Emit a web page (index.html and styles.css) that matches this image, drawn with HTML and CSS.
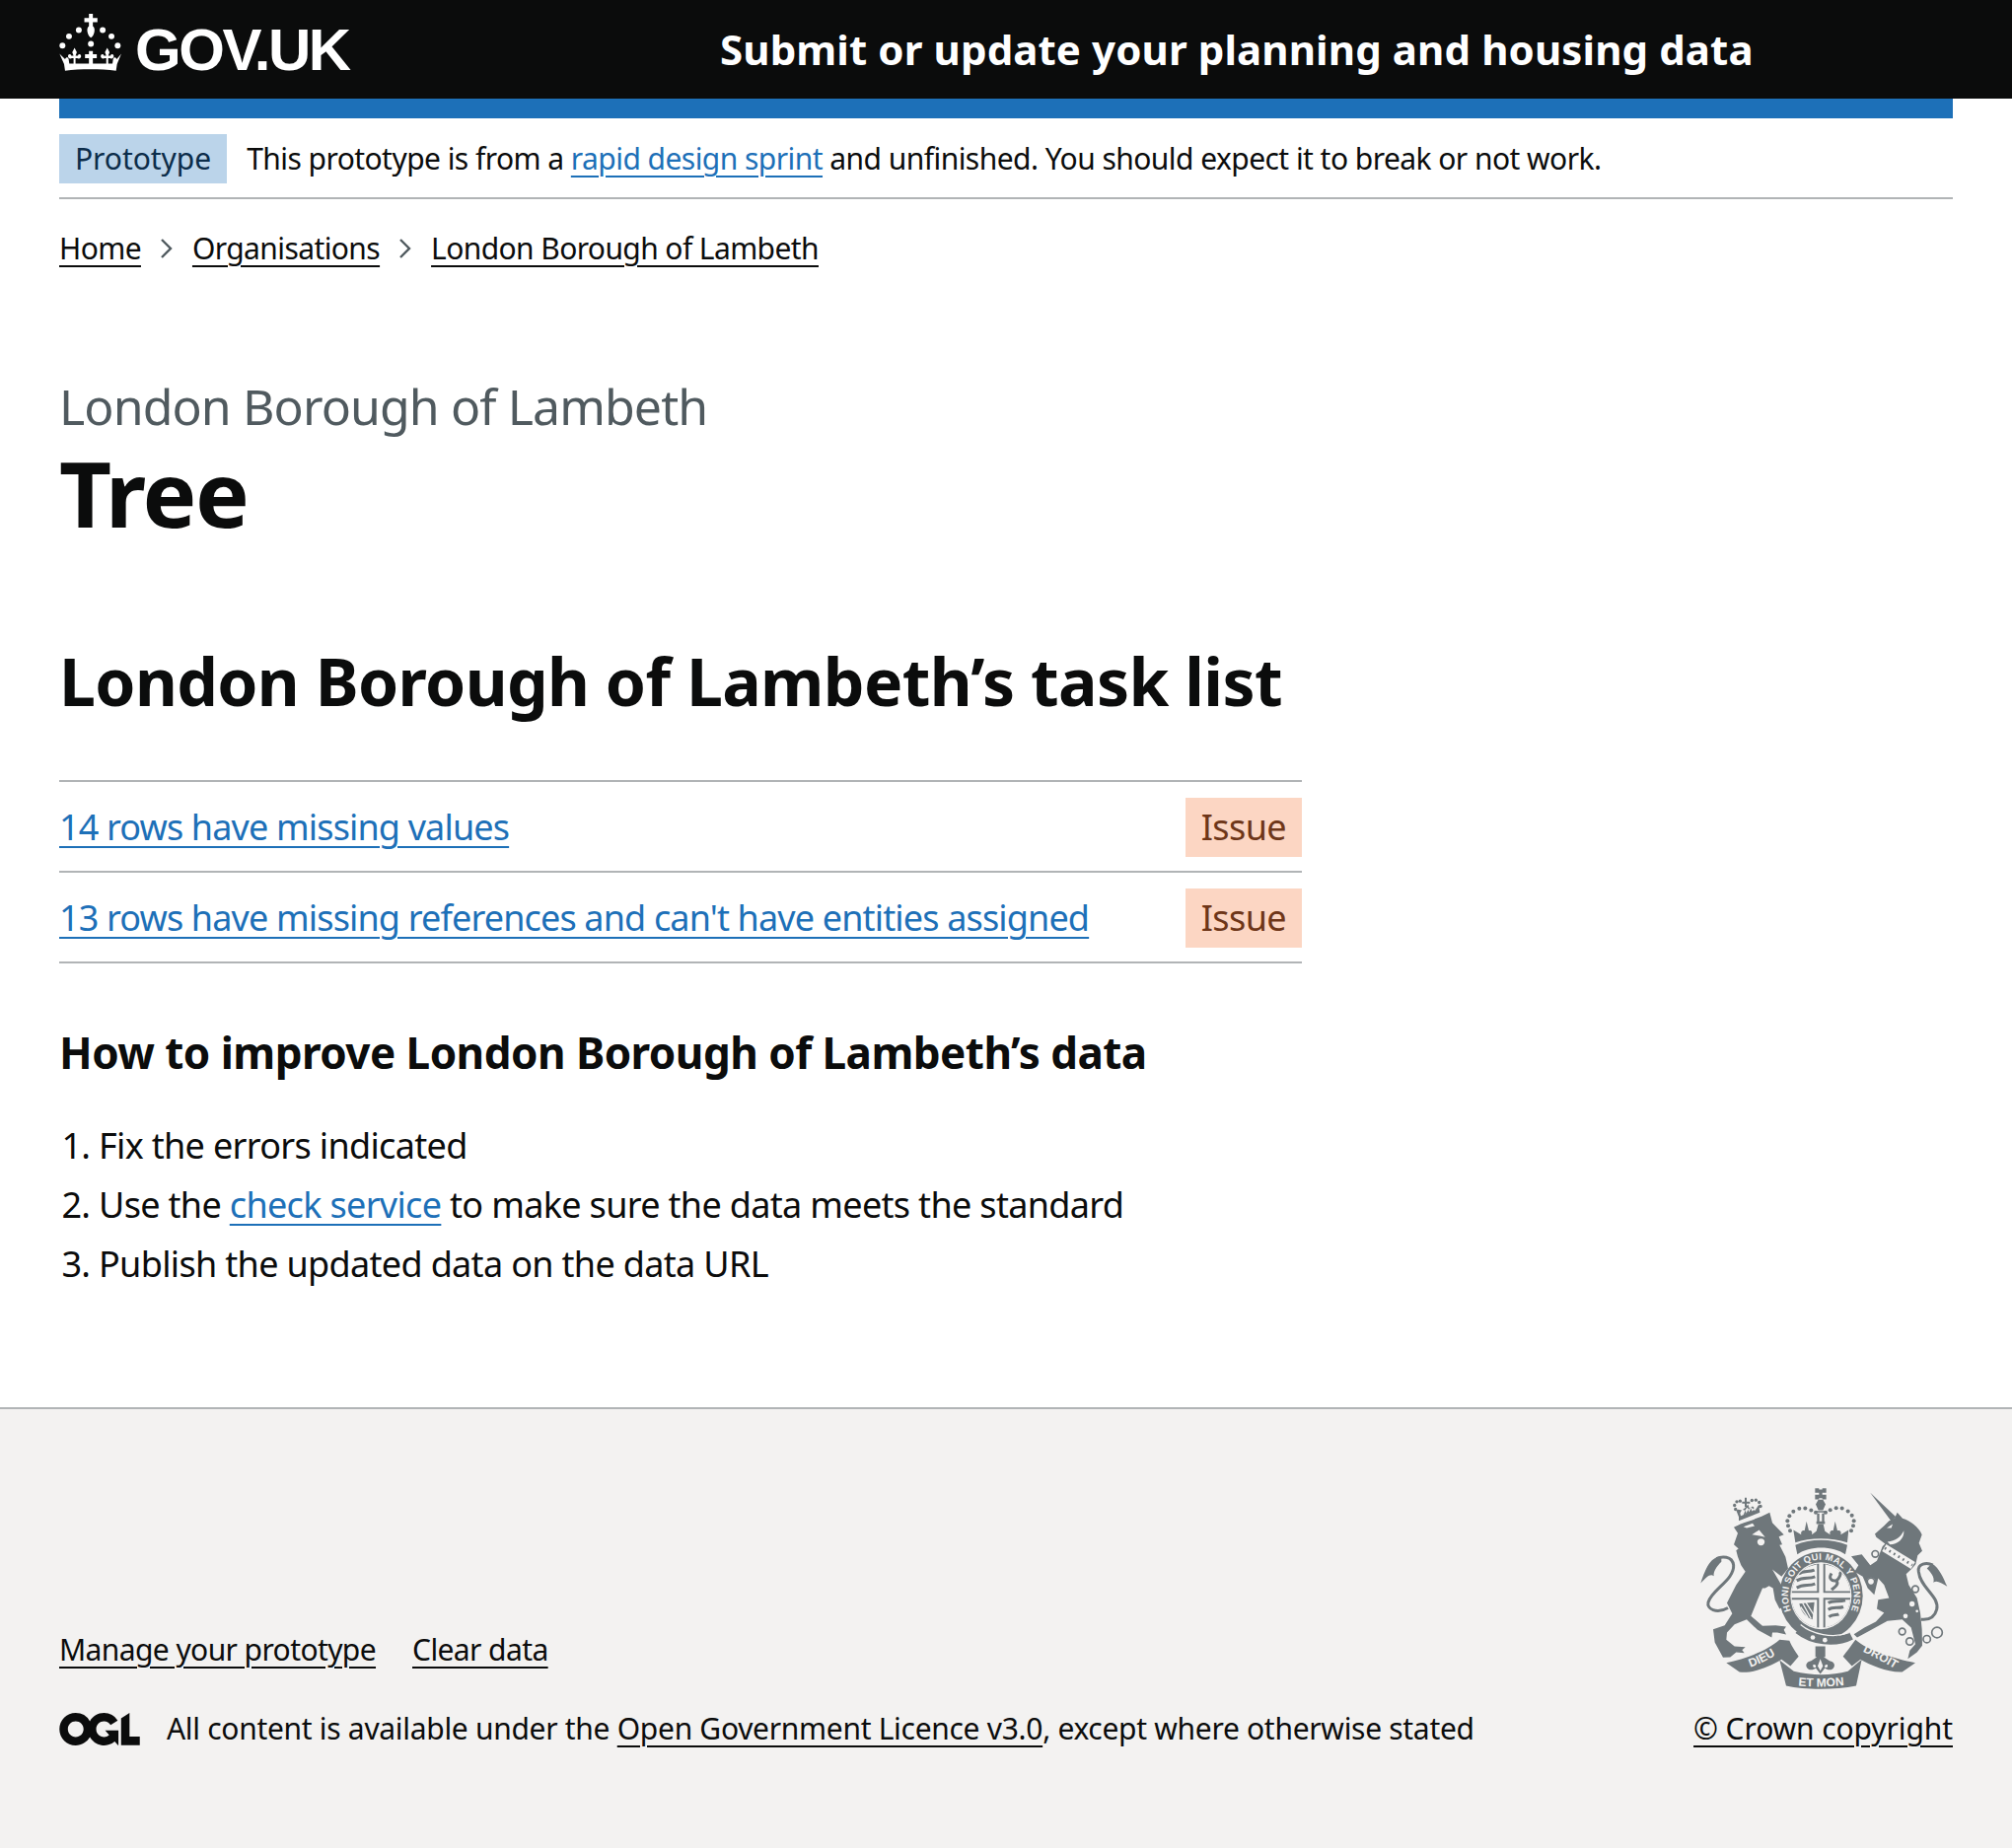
FILE: index.html
```html
<!DOCTYPE html>
<html lang="en">
<head>
<meta charset="utf-8">
<title>Tree - London Borough of Lambeth</title>
<link rel="stylesheet" href="styles.css">
</head>
<body>
<header class="site-header">
  <a class="logo" href="#">
    <svg class="crown" viewBox="15 18 190 175" aria-hidden="true">
      <defs><path id="fl" d="M0 0L7 14L3 24H10C12 18 20 18 20 26C20 34 12 34 8 32H3V50H-3V32H-8C-12 34-20 34-20 26C-20 18-12 18-10 24H-3L-7 14Z"/></defs>
      <path d="M106 18h12v13h14v13h-14v12c6 5 6 12 4 20c-2 8-6 13-10 15c-4-2-8-7-10-15c-2-8-2-15 4-20V44H92V31h14z"/>
      <circle cx="75" cy="68" r="9"/><circle cx="148" cy="68" r="9"/><circle cx="45" cy="87" r="9"/><circle cx="175" cy="87" r="9"/><circle cx="25" cy="115" r="9"/><circle cx="194" cy="115" r="9"/><circle cx="112" cy="110" r="9"/>
      <use href="#fl" x="62" y="122"/><use href="#fl" x="162" y="122"/>
      <path d="M106 132h12v10h12v12h-12v18h-12v-18H94v-12h12z"/>
      <path d="M16 140L33 157C36 150 42 150 44 157L46 170H178L180 157C182 150 188 150 191 157L205 140L192 172L189 192C140 186 80 186 33 192L30 172Z"/>
    </svg>
    <span class="logo-text">GOV.UK</span>
  </a>
  <a class="service-name" href="#">Submit or update your planning and housing data</a>
</header>
<div class="header-bar"></div>
<div class="page">
  <div class="phase">
    <strong class="tag tag-blue">Prototype</strong>
    <span class="phase-text">This prototype is from a <a class="link" href="#">rapid design sprint</a> and unfinished. You should expect it to break or not work.</span>
  </div>
  <nav class="crumbs">
    <a class="crumb" href="#">Home</a>
    <svg class="chev" viewBox="0 0 14 22"><path d="M2 2l9 9-9 9"/></svg>
    <a class="crumb" href="#">Organisations</a>
    <svg class="chev" viewBox="0 0 14 22"><path d="M2 2l9 9-9 9"/></svg>
    <a class="crumb" href="#">London Borough of Lambeth</a>
  </nav>
  <main class="main">
    <span class="caption">London Borough of Lambeth</span>
    <h1 class="title">Tree</h1>
    <h2 class="subtitle">London Borough of Lambeth’s task list</h2>
    <ul class="tasks">
      <li class="task"><a class="link" href="#">14 rows have missing values</a><strong class="tag tag-issue">Issue</strong></li>
      <li class="task"><a class="link" href="#">13 rows have missing references and can't have entities assigned</a><strong class="tag tag-issue">Issue</strong></li>
    </ul>
    <h3 class="how">How to improve London Borough of Lambeth’s data</h3>
    <ol class="steps">
      <li>Fix the errors indicated</li>
      <li>Use the <a class="link" href="#">check service</a> to make sure the data meets the standard</li>
      <li>Publish the updated data on the data URL</li>
    </ol>
  </main>
</div>
<footer class="footer">
  <div class="footer-inner">
    <div class="footer-left">
      <div class="footer-links">
        <a class="flink" href="#">Manage your prototype</a>
        <a class="flink" href="#">Clear data</a>
      </div>
      <div class="licence">
        <svg class="ogl" viewBox="0 0 483.2 195.7" aria-hidden="true"><path d="M421.5 142.8V.1l-50.7 32.3v161.1h112.4v-50.7zm-122.3-9.6A47.12 47.12 0 0 1 221 97.8c0-26 21.1-47.1 47.1-47.1 16.7 0 31.4 8.7 39.7 21.8l42.7-27.2A97.63 97.63 0 0 0 268.1 0c-36.5 0-68.3 20.1-85.1 49.7A98 98 0 0 0 97.8 0C43.9 0 0 43.9 0 97.8s43.9 97.8 97.8 97.8c36.5 0 68.3-20.1 85.1-49.7a97.76 97.76 0 0 0 149.6 25.4l19.4 22.2h3v-87.8h-80l24.3 27.5zM97.8 145c-26 0-47.1-21.1-47.1-47.1s21.1-47.1 47.1-47.1 47.2 21 47.2 47S123.8 145 97.8 145"/></svg>
        <span class="licence-text">All content is available under the <a class="flink" href="#">Open Government Licence v3.0</a>, except where otherwise stated</span>
      </div>
    </div>
    <div class="footer-right">
      <svg class="crest" viewBox="125 85 765 620" aria-hidden="true">
        <defs>
          <path id="ring" d="M431 500A100 110 0 1 1 565 500"/>
          <path id="rib-l" d="M262 642Q325 625 378 585"/>
          <path id="rib-r" d="M612 582Q675 610 735 648"/>
          <path id="rib-c" d="M412 690Q495 700 585 688"/>
          <clipPath id="shield-clip"><ellipse cx="498" cy="418" rx="90" ry="98"/></clipPath>
        </defs>
        <path class="cs" d="M215 455C180 475 150 458 155 438C165 400 235 370 232 325C228 295 195 298 180 305"/>
        <path d="M195 298C165 300 150 325 132 380C150 362 160 350 172 358C170 345 180 330 195 315Z"/>
        <path d="M233 210C255 195 300 188 342 165L350 196L385 232L370 238L380 262L372 264L390 300L398 335L378 360L350 338L380 390L405 430L400 445L385 450L372 458L358 430L352 395L340 388L328 395L320 395L305 430L285 480L320 510L360 508L392 512L385 522L392 536L365 530L350 530L348 545L305 522L272 490L235 505L212 530L210 552L235 572L268 574L258 583L265 592L240 590L222 605L200 606L175 560L170 520L205 508L228 472L212 440L240 385L268 345L255 325L245 300L240 280L247 275L233 262L245 228Z"/>
        <path class="lt" d="M262 208L290 198L296 206L272 212ZM288 232L310 218L328 240L312 236ZM305 250a11 12 0 1 0 21 0a11 8 0 0 0-21 0Z"/>
        <path d="M248 190L312 165L310 152L318 146L308 142L300 155L290 146L280 152L276 140L268 150L258 158L246 156L240 158L248 178Z"/>
        <path d="M258 132h8v-12h6v12h10v6h-10v10h-6v-10h-8z"/>
        <g><circle cx="238" cy="155" r="5"/><circle cx="235" cy="143" r="5"/><circle cx="242" cy="132" r="5"/><circle cx="252" cy="130" r="5"/><circle cx="288" cy="128" r="5"/><circle cx="300" cy="127" r="5"/><circle cx="310" cy="134" r="5"/><circle cx="314" cy="146" r="5"/></g>
        <path class="lt" d="M254 175l46-18-3-8-6 5-6-6-6 8-6-6-6 9-9-3-6 10z"/>
        <path d="M262 172l6-14 3 10 5-12 3 8 6-12 3 10 6-6 1 6z"/>
        <path d="M480 91h12v14h-12zM502 91h12v14h-12zM480 111h12v14h-12zM502 111h12v14h-12zM492 95h10v26h-10z"/>
        <path d="M490 126h14l8 14-8 18h-14l-8-18z"/>
        <path d="M484 160h26v5h-26zM484 192h26v8h-26zM486 168h7v24h-7zM501 168h7v24h-7z"/>
        <g><circle cx="404" cy="220" r="6"/><circle cx="398" cy="205" r="6"/><circle cx="396" cy="190" r="6"/><circle cx="402" cy="175" r="6"/><circle cx="414" cy="162" r="6"/><circle cx="432" cy="153" r="6"/><circle cx="450" cy="152" r="6"/><circle cx="468" cy="158" r="6"/><circle cx="482" cy="165" r="6"/><circle cx="512" cy="165" r="6"/><circle cx="526" cy="157" r="6"/><circle cx="544" cy="151" r="6"/><circle cx="562" cy="152" r="6"/><circle cx="580" cy="161" r="6"/><circle cx="592" cy="174" r="6"/><circle cx="598" cy="190" r="6"/><circle cx="596" cy="205" r="6"/><circle cx="590" cy="220" r="6"/></g>
        <path d="M414 218L438 232C435 220 445 218 448 220L454 192L461 220C465 218 474 220 470 232L484 222L490 200H505L510 222L526 232C522 220 532 218 535 220L541 192L548 220C552 218 562 220 558 232L582 218L578 256C530 240 464 240 420 256Z"/>
        <path d="M420 264C465 244 530 244 578 264L572 292C535 265 462 265 426 292Z"/>
        <ellipse class="garter" cx="498" cy="418" rx="127" ry="134"/>
        <ellipse class="lt" cx="498" cy="418" rx="93" ry="102"/>
        <text class="ring-text"><textPath href="#ring" startOffset="50%" text-anchor="middle">HONI SOIT QUI MAL Y PENSE</textPath></text>
        <g clip-path="url(#shield-clip)">
          <path d="M408 316H492V409H408ZM505 316H590V409H505ZM408 424H492V520H408ZM505 424H590V520H505Z"/>
          <path class="lt" d="M405 345L486 322V404H405ZM511 322L590 345V404H511ZM405 430H486V515H405ZM511 430H590V515H511Z"/>
          <path class="lump" d="M430 352C445 340 460 348 478 340M424 372C445 360 460 368 480 360M424 394C445 382 460 390 480 382M520 440C535 430 550 438 572 432M520 460C535 450 550 458 566 452M522 482C535 472 545 478 552 474"/>
          <path class="lump" d="M530 350C520 365 530 375 545 372C555 385 535 395 530 400M545 372C555 365 560 350 555 345"/>
          <path class="lump2" d="M432 442L478 438L472 490C455 485 438 470 432 442Z"/>
          <path class="lt-s" d="M442 440L468 488M452 438L476 476M436 452L458 484"/>
        </g>
        <path d="M648 105L726 178L712 192Z"/>
        <path d="M662 230L690 205L705 190L722 183L730 165L746 183C770 190 795 210 805 232L796 258L806 282L792 295L786 322L775 335L757 352L765 385L790 425L800 470L805 520L806 570L790 590L762 610L768 585L785 565L772 515L745 490L700 495L640 528L608 545L598 535L630 515L665 497L690 470L668 458L672 430L705 425L690 385L672 365L660 415L640 395L625 360L600 345L612 325L590 298L622 292L648 325L668 312L685 268L693 260L680 250L666 240Z"/>
        <path class="lt" d="M698 212L716 200L712 212ZM700 254C725 250 740 240 750 220C752 245 730 262 708 262Z"/>
        <path class="collar" d="M690 272L778 326"/>
        <path class="collar-d" d="M692 273L776 325"/>
        <circle class="ring-c" cx="663" cy="291" r="10"/><circle class="lt" cx="650" cy="375" r="12"/><circle class="ring-c" cx="650" cy="375" r="11"/><circle class="lt" cx="785" cy="398" r="10"/><circle class="ring-c" cx="785" cy="398" r="10"/><circle class="ring-c" cx="745" cy="527" r="10"/><circle class="ring-c" cx="768" cy="557" r="11"/><circle class="ring-c" cx="820" cy="550" r="11"/><circle class="ring-c" cx="851" cy="530" r="16"/>
        <circle class="lt" cx="775" cy="443" r="8"/><circle class="lt" cx="755" cy="480" r="7"/><circle class="lt" cx="790" cy="465" r="4"/>
        <path class="cs" d="M795 345C800 395 860 420 850 460C842 490 820 492 802 490M795 345C790 320 820 315 838 325"/>
        <path d="M835 320C860 335 870 365 882 390C862 378 850 370 840 378C845 360 830 345 820 335Z"/>
        <path d="M210 622C270 610 335 585 372 552L402 555C410 575 425 595 430 603L405 632L378 612C340 635 290 655 250 650Z"/>
        <path d="M372 614L415 648C470 662 530 662 580 648L622 612L605 692C540 705 450 705 392 692Z"/>
        <path d="M565 603C575 590 590 570 603 552C640 585 720 610 785 622L745 650C700 652 650 630 618 612L592 632Z"/>
        <text class="rib-text"><textPath href="#rib-l" startOffset="50%" text-anchor="middle">DIEU</textPath></text>
        <text class="rib-text"><textPath href="#rib-r" startOffset="50%" text-anchor="middle">DROIT</textPath></text>
        <text class="rib-text"><textPath href="#rib-c" startOffset="50%" text-anchor="middle">ET MON</textPath></text>
        <path d="M481 572h30v32h-5l18 12c14 2 20 14 10 24c-8 6-18 4-24-2l-14 18-14-18c-6 6-16 8-24 2c-10-10-4-22 10-24l18-12h-5z"/>
        <path class="lt" d="M496 610l8 22-8 14-8-14zM474 628c8-2 10 4 8 8c-4 2-10 0-8-8zM518 628c-8-2-10 4-8 8c4 2 10 0 8-8z"/>
        <path class="belt" d="M428 522C470 556 540 566 590 540"/>
        <path class="belt-l" d="M436 506C470 535 535 550 585 530"/>
        <circle class="lt" cx="473" cy="545" r="7"/><circle class="lt" cx="510" cy="553" r="7"/>
      </svg>
      <a class="flink" href="#">© Crown copyright</a>
    </div>
  </div>
</footer>
</body>
</html>
```
FILE: styles.css
```css
* { box-sizing: border-box; }
html, body { margin: 0; padding: 0; }
body {
  font-family: "Noto Sans", sans-serif;
  font-size: 30px;
  line-height: 50px;
  letter-spacing: -0.55px;
  color: #0b0c0c;
  background: #fff;
  min-height: 100vh;
  display: flex;
  flex-direction: column;
}
a { color: inherit; }

.site-header {
  height: 100px;
  background: #0b0c0c;
  color: #fff;
  padding: 0 60px;
  display: flex;
  align-items: center;
}
.logo {
  width: 670px;
  display: flex;
  align-items: center;
  gap: 14px;
  text-decoration: none;
  color: #fff;
}
.crown { width: 63px; height: 58px; fill: #fff; margin-top: -14px; }
.logo-text {
  font-family: "Liberation Sans", Arial, sans-serif;
  font-weight: 700;
  font-size: 60px;
  line-height: 60px;
  letter-spacing: -2.4px;
  margin-top: 2px;
}
.service-name {
  font-weight: 700;
  font-size: 42px;
  line-height: 50px;
  letter-spacing: 0.1px;
  color: #fff;
  text-decoration: none;
}
.header-bar { height: 20px; margin: 0 60px; background: #1d70b8; }
.page { padding: 0 60px; }

.phase {
  display: flex;
  align-items: center;
  gap: 20px;
  padding: 16px 0 14px;
  border-bottom: 2px solid #b1b4b6;
}
.tag {
  display: inline-block;
  font-weight: 400;
  line-height: 50px;
  padding: 0 16px;
}
.tag-blue { background: #bbd4ea; color: #0c2d4a; letter-spacing: -0.05px; }
.tag-issue {
  background: #fcd6c3;
  color: #6e3619;
  padding: 5px 16px;
  flex: none;
  font-size: 36px;
  letter-spacing: -0.6px;
}

.link {
  color: #1d70b8;
  text-decoration: underline;
  text-decoration-thickness: 2px;
  text-underline-offset: 6px;
}
.crumb, .flink {
  color: #0b0c0c;
  text-decoration: underline;
  text-decoration-thickness: 2px;
  text-underline-offset: 6px;
}
.crumbs {
  display: flex;
  align-items: center;
  gap: 19px;
  padding-top: 25px;
  letter-spacing: -0.6px;
}
.chev { width: 14px; height: 22px; fill: none; stroke: #505a5f; stroke-width: 2.4; }

.main { padding-top: 105px; }
.caption { display: block; font-size: 50px; line-height: 60px; color: #505a5f; letter-spacing: -0.9px; }
.title { margin: 8px 0 100px; font-size: 92px; line-height: 100px; font-weight: 700; letter-spacing: -1.6px; }
.subtitle { margin: 0 0 61px; font-size: 66px; line-height: 80px; font-weight: 700; letter-spacing: -0.63px; }
.tasks {
  list-style: none;
  margin: 0 0 60px;
  padding: 0;
  width: 1260px;
  border-top: 2px solid #b1b4b6;
  font-size: 36px;
  letter-spacing: -0.85px;
}
.task {
  display: flex;
  justify-content: space-between;
  align-items: center;
  padding: 16px 0 14px;
  border-bottom: 2px solid #b1b4b6;
}
.how { margin: 0 0 40px; font-size: 44px; line-height: 60px; font-weight: 700; letter-spacing: -0.53px; }
.steps { margin: 0 0 120px; padding: 0 0 0 40px; font-size: 36px; letter-spacing: -0.67px; }
.steps li { margin-bottom: 10px; }

.footer {
  background: #f3f2f1;
  border-top: 2px solid #b1b4b6;
  flex: 1;
  padding: 78px 60px 0;
}
.footer-inner { display: flex; justify-content: space-between; align-items: flex-end; }
.footer-links { display: flex; gap: 37px; margin-bottom: 30px; letter-spacing: -0.6px; }
.licence { display: flex; align-items: center; gap: 27px; letter-spacing: -0.3px; }
.ogl { width: 82px; height: 33px; fill: #0b0c0c; }
.footer-right { display: flex; flex-direction: column; align-items: flex-end; letter-spacing: -0.1px; }
.crest { width: 255px; height: 207px; fill: #6f777b; margin-bottom: 14px; margin-right: 3px; }
.cs { fill: none; stroke: #6f777b; stroke-width: 9; }
.lt { fill: #f3f2f1; }
.lt-s { fill: none; stroke: #f3f2f1; stroke-width: 4; }
.lump { fill: none; stroke: #6f777b; stroke-width: 9; }
.lump2 { fill: #6f777b; }
.garter { fill: #6f777b; }
.collar { fill: none; stroke: #f3f2f1; stroke-width: 24; }
.collar-d { fill: none; stroke: #6f777b; stroke-width: 8; stroke-dasharray: 5 11; }
.belt { fill: none; stroke: #6f777b; stroke-width: 24; }
.belt-l { fill: none; stroke: #f3f2f1; stroke-width: 4; }
.ring-text { fill: #f3f2f1; font-family: "Liberation Sans", sans-serif; font-weight: 700; font-size: 28px; letter-spacing: 1px; }
.rib-text { fill: #f3f2f1; font-family: "Liberation Sans", sans-serif; font-weight: 700; font-size: 36px; letter-spacing: 0; }
.ring-c { fill: none; stroke: #6f777b; stroke-width: 5; }
```
